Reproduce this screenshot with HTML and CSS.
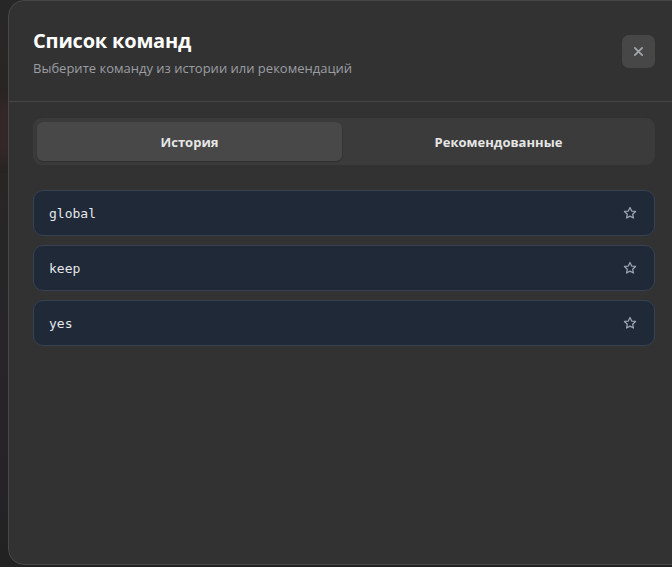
FILE: index.html
```html
<!DOCTYPE html>
<html>
<head>
    <title>Список команд</title>
    <meta charset="UTF-8">
    <link rel="stylesheet" href="styles.css">
</head>
<body>
    <div class="backdrop">
        <div class="glow"></div>
        <div class="modal">
            <div class="modal-header">
                <div>
                    <h2>Список команд</h2>
                    <p class="subtitle">Выберите команду из истории или рекомендаций</p>
                </div>
                <button class="close-btn" aria-label="Закрыть">
                    <svg width="11" height="11" viewBox="0 0 12 12"><path d="M2 2L10 10M10 2L2 10" stroke="#a3a7ad" stroke-width="1.9" stroke-linecap="round"/></svg>
                </button>
            </div>
            <div class="modal-body">
                <div class="tabs">
                    <button class="tab active">История</button>
                    <button class="tab">Рекомендованные</button>
                </div>
                <div class="command-list">
                    <div class="command">
                        <span>global</span>
                        <svg class="star" width="14" height="14" viewBox="0 0 24 24"><path d="M12 2.5l2.9 6.1 6.6.8-4.9 4.6 1.3 6.6L12 17.3l-5.9 3.3 1.3-6.6-4.9-4.6 6.6-.8z" fill="none" stroke="#9aa3b0" stroke-width="2.2" stroke-linejoin="round"/></svg>
                    </div>
                    <div class="command">
                        <span>keep</span>
                        <svg class="star" width="14" height="14" viewBox="0 0 24 24"><path d="M12 2.5l2.9 6.1 6.6.8-4.9 4.6 1.3 6.6L12 17.3l-5.9 3.3 1.3-6.6-4.9-4.6 6.6-.8z" fill="none" stroke="#9aa3b0" stroke-width="2.2" stroke-linejoin="round"/></svg>
                    </div>
                    <div class="command">
                        <span>yes</span>
                        <svg class="star" width="14" height="14" viewBox="0 0 24 24"><path d="M12 2.5l2.9 6.1 6.6.8-4.9 4.6 1.3 6.6L12 17.3l-5.9 3.3 1.3-6.6-4.9-4.6 6.6-.8z" fill="none" stroke="#9aa3b0" stroke-width="2.2" stroke-linejoin="round"/></svg>
                    </div>
                </div>
            </div>
        </div>
    </div>
</body>
</html>
```

FILE: styles.css
```css
/* Модальное окно со списком команд */
body {
    margin: 0;
    background-color: #262626;
    font-family: "Open Sans", "Noto Sans", sans-serif;
    overflow: hidden;
}
.backdrop {
    position: relative;
    height: 567px;
    padding-left: 8px;
    background: linear-gradient(180deg, #272727 0%, #2a2424 20%, #262626 45%, #272429 70%, #222 100%);
}
.glow {
    position: absolute;
    left: 0;
    top: 100px;
    width: 8px;
    height: 60px;
    background-color: #3d2a2a;
    filter: blur(6px);
}
.modal {
    position: relative;
    width: 680px;
    height: 565px;
    box-sizing: border-box;
    background-color: #323232;
    border: 1px solid #474747;
    border-radius: 16px;
}
.modal-header {
    display: flex;
    justify-content: space-between;
    align-items: flex-start;
    padding: 26px 24px 0 24px;
    width: 622px;
    height: 74px;
    border-bottom: 1px solid #464646;
}
.modal-header h2 {
    margin: 0;
    font-size: 20px;
    line-height: 28px;
    font-weight: 700;
    color: #ffffff;
    letter-spacing: -0.2px;
}
.subtitle {
    margin: 4px 0 0 0;
    font-size: 13px;
    line-height: 18px;
    color: #9b9ea3;
}
.close-btn {
    margin-top: 8px;
    width: 33px;
    height: 33px;
    border: none;
    border-radius: 7px;
    background-color: #474747;
    display: flex;
    align-items: center;
    justify-content: center;
    cursor: pointer;
    padding: 0;
}
.modal-body {
    padding: 16px 24px;
    width: 622px;
}
.tabs {
    display: flex;
    gap: 4px;
    padding: 4px;
    background-color: #3b3b3b;
    border-radius: 9px;
}
.tab {
    flex: 1;
    height: 39px;
    border: none;
    border-radius: 6px;
    background: transparent;
    color: #e6e6e6;
    font-family: "Open Sans", "Noto Sans", sans-serif;
    font-size: 13px;
    font-weight: 700;
    cursor: pointer;
}
.tab.active {
    background-color: #484848;
    box-shadow: 0 1px 2px rgba(0, 0, 0, 0.25);
}
.command-list {
    display: flex;
    flex-direction: column;
    gap: 9px;
    margin-top: 25px;
}
.command {
    display: flex;
    align-items: center;
    justify-content: space-between;
    height: 44px;
    padding: 0 17px 0 15px;
    background-color: #1f2937;
    border: 1px solid #364152;
    border-radius: 10px;
    font-family: "DejaVu Sans Mono", "Liberation Mono", monospace;
    font-size: 13px;
    color: #e5e7eb;
}
.star {
    display: block;
}
```
